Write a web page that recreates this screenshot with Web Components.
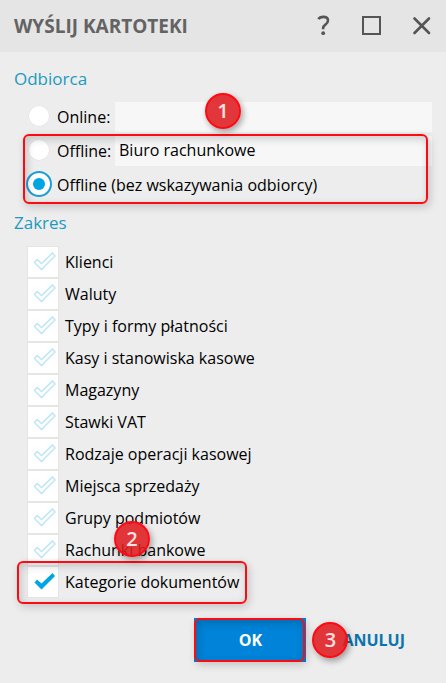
<!DOCTYPE html>
<html lang="pl">
<head>
<meta charset="utf-8">
<meta name="viewport" content="width=device-width, initial-scale=1">
<title>Wyślij kartoteki</title>
<style>
    html, body {
        margin: 0;
        min-height: 100vh;
    }

    body {
        display: flex;
        background: #ededed;
        color: #000;
        font: 16px/24px "Open Sans", "Noto Sans", sans-serif;
        --accent: #00a5e3;
        --mark: #ff0a12;
    }

    dialog-window { flex: 1; }
</style>
</head>
<body>

<dialog-window heading="WYŚLIJ KARTOTEKI">
    <form-section heading="Odbiorca">
        <recipient-picker></recipient-picker>
    </form-section>
    <form-section heading="Zakres">
        <check-option label="Klienci"></check-option>
        <check-option label="Waluty"></check-option>
        <check-option label="Typy i formy płatności"></check-option>
        <check-option label="Kasy i stanowiska kasowe"></check-option>
        <check-option label="Magazyny"></check-option>
        <check-option label="Stawki VAT"></check-option>
        <check-option label="Rodzaje operacji kasowej"></check-option>
        <check-option label="Miejsca sprzedaży"></check-option>
        <check-option label="Grupy podmiotów"></check-option>
        <check-option label="Rachunki bankowe"></check-option>
        <check-option label="Kategorie dokumentów" checked step="2"></check-option>
    </form-section>
    <dialog-actions slot="footer"></dialog-actions>
</dialog-window>

<script>
/* Okno dialogowe: pasek tytułu, treść, stopka */
class DialogWindow extends HTMLElement {
    constructor() {
        super();
        this.attachShadow({ mode: 'open' });
    }

    connectedCallback() {
        this.shadowRoot.innerHTML = `
            <style>
                :host { display: flex; flex-direction: column; }

                header {
                    display: flex;
                    align-items: center;
                    justify-content: space-between;
                    height: 52px;
                    padding: 0 10px 0 14px;
                    background: #e5e5e5;
                }

                h1 {
                    margin: 0;
                    font-size: 19px;
                    line-height: 24px;
                    font-weight: 700;
                    color: #636363;
                }

                nav { display: flex; gap: 21px; }

                button {
                    display: block;
                    width: 28px;
                    height: 28px;
                    padding: 0;
                    border: 0;
                    background: none;
                }

                svg {
                    display: block;
                    fill: none;
                    stroke: #555;
                    stroke-width: 2.6;
                }

                main { padding: 15px 14px 0; }
            </style>
            <header>
                <h1>${this.getAttribute('heading') || ''}</h1>
                <nav>
                    <button type="button" aria-label="Pomoc">
                        <svg width="28" height="28" viewBox="0 0 28 28"><path d="M8.4 7.2C9.4 5.4 11.4 4.9 13.2 4.9C16 4.9 18 6.2 18 8.6C18 10.8 16.8 11.8 15.2 12.9C13.7 13.9 13.1 14.8 13.1 16.4V17.2" stroke-width="2.6"/><circle cx="13.2" cy="21.2" r="1.9" fill="#555" stroke="none"/></svg>
                    </button>
                    <button type="button" aria-label="Maksymalizuj">
                        <svg width="28" height="28" viewBox="0 0 28 28"><rect x="4" y="5" width="17" height="17" stroke-width="2"/></svg>
                    </button>
                    <button type="button" aria-label="Zamknij">
                        <svg width="28" height="28" viewBox="0 0 28 28"><path d="M6.5 6.5L21 21M21 6.5L6.5 21" stroke-linecap="round"/></svg>
                    </button>
                </nav>
            </header>
            <main><slot></slot></main>
            <slot name="footer"></slot>
        `;
    }
}

class FormSection extends HTMLElement {
    constructor() {
        super();
        this.attachShadow({ mode: 'open' });
    }

    connectedCallback() {
        this.shadowRoot.innerHTML = `
            <style>
                :host { display: block; }

                h2 {
                    margin: 0 0 11px;
                    font-size: 17px;
                    line-height: 24px;
                    font-weight: 400;
                    color: #1c9ac0;
                }

                .content { padding: 0 0 0 13px; }
            </style>
            <h2>${this.getAttribute('heading') || ''}</h2>
            <div class="content"><slot></slot></div>
        `;
    }
}

/* Numer kroku w czerwonym kółku */
class StepBadge extends HTMLElement {
    constructor() {
        super();
        this.attachShadow({ mode: 'open' });
        this.shadowRoot.innerHTML = `
            <style>
                :host {
                    display: grid;
                    place-items: center;
                    box-sizing: border-box;
                    width: 36px;
                    height: 36px;
                    border: 2px solid var(--mark);
                    border-radius: 50%;
                    background: rgba(222, 28, 32, .88);
                    box-shadow: 2px 3px 6px rgba(0, 0, 0, .35);
                    color: #ffe1e1;
                    font: 600 20px/24px "Open Sans", sans-serif;
                    pointer-events: none;
                    z-index: 2;
                }
            </style>
            <slot></slot>
        `;
    }
}

/* Czerwona ramka nad wyróżnionym obszarem */
class FocusFrame extends HTMLElement {
    constructor() {
        super();
        this.attachShadow({ mode: 'open' });
        this.shadowRoot.innerHTML = `
            <style>
                :host {
                    display: block;
                    box-sizing: border-box;
                    border: 2px solid var(--mark);
                    border-radius: 6px;
                    box-shadow: 2px 3px 8px rgba(0, 0, 0, .18), inset 2px 3px 8px rgba(0, 0, 0, .18);
                    pointer-events: none;
                    z-index: 1;
                }
            </style>
        `;
    }
}

class RecipientPicker extends HTMLElement {
    constructor() {
        super();
        this.attachShadow({ mode: 'open' });
    }

    connectedCallback() {
        this.shadowRoot.innerHTML = `
            <style>
                :host { display: block; position: relative; padding-bottom: 11px; }

                .row {
                    display: flex;
                    align-items: center;
                    height: 30px;
                }

                .marked {
                    position: relative;
                    display: grid;
                    gap: 4px;
                    margin-top: 4px;
                }

                label { display: flex; align-items: center; gap: 4px; white-space: nowrap; }

                .row.field label { width: 88px; }

                input[type="radio"] {
                    appearance: none;
                    display: grid;
                    place-items: center;
                    box-sizing: border-box;
                    width: 26px;
                    height: 26px;
                    margin: 0 0 2px -1px;
                    border: 2px solid transparent;
                    border-radius: 50%;
                    background: #fff;
                    background-clip: padding-box;
                    box-shadow: inset 0 0 0 1px #e6e6e6;
                }

                label { gap: 5px; }

                input[type="radio"]::before {
                    content: "";
                    width: 12px;
                    height: 12px;
                    border-radius: 50%;
                }

                input[type="radio"]:checked { border-color: #1b9fd8; box-shadow: none; }
                input[type="radio"]:checked::before { background: var(--accent); }

                input[type="text"] {
                    flex: 1;
                    min-width: 0;
                    box-sizing: border-box;
                    height: 30px;
                    padding: 0 4px 2px;
                    border: 0;
                    background: #f7f7f7;
                    color: inherit;
                    font: inherit;
                }

                focus-frame { position: absolute; inset: -2px 4px -4px -4px; }
                step-badge { position: absolute; left: 178px; top: -9px; }
            </style>
            <div class="row field">
                <label><input type="radio" name="recipient">Online:</label>
                <input type="text" aria-label="Odbiorca online">
            </div>
            <div class="marked">
                <div class="row field">
                    <label><input type="radio" name="recipient">Offline:</label>
                    <input type="text" aria-label="Odbiorca offline" value="Biuro rachunkowe">
                </div>
                <div class="row">
                    <label><input type="radio" name="recipient" checked>Offline (bez wskazywania odbiorcy)</label>
                </div>
                <focus-frame></focus-frame>
            </div>
            <step-badge>1</step-badge>
        `;
    }
}

class CheckOption extends HTMLElement {
    constructor() {
        super();
        this.attachShadow({ mode: 'open' });
    }

    connectedCallback() {
        const step = this.getAttribute('step');

        this.shadowRoot.innerHTML = `
            <style>
                :host { display: flex; position: relative; }

                label { display: flex; align-items: center; gap: 6px; }

                .box { display: grid; }
                .box > * { grid-area: 1 / 1; }

                input {
                    appearance: none;
                    box-sizing: border-box;
                    width: 32px;
                    height: 32px;
                    margin: 0;
                    border: 1px solid #e5e5e5;
                    background: #fff;
                }

                svg {
                    fill: none;
                    stroke: #b5e5f7;
                    stroke-width: 1.3;
                    pointer-events: none;
                }

                input:checked + svg { fill: var(--accent); stroke: none; }

                focus-frame { position: absolute; left: -10px; top: -5px; width: 230px; height: 43px; }
                step-badge { position: absolute; left: 87px; top: -45px; }
            </style>
            <label>
                <span class="box">
                    <input type="checkbox" ${this.hasAttribute('checked') ? 'checked' : ''}>
                    <svg width="32" height="32" viewBox="0 0 32 32"><path d="M7.5 16.5L10 13.5L14.5 17.5L25.5 7L28 10L14.5 23.5Z"/></svg>
                </span>
                ${this.getAttribute('label') || ''}
            </label>
            ${step ? `<focus-frame></focus-frame><step-badge>${step}</step-badge>` : ''}
        `;
    }
}

class DialogActions extends HTMLElement {
    constructor() {
        super();
        this.attachShadow({ mode: 'open' });
    }

    connectedCallback() {
        this.shadowRoot.innerHTML = `
            <style>
                :host {
                    display: flex;
                    justify-content: flex-end;
                    gap: 24px;
                    padding: 20px 29px 20px 14px;
                }

                .item { position: relative; display: flex; }

                button {
                    height: 44px;
                    padding: 0 12px;
                    border: 0;
                    background: none;
                    color: #0b74ad;
                    font: 700 16px/24px "Open Sans", sans-serif;
                }

                .primary { width: 112px; background: #0083d8; color: #fff; }

                focus-frame { position: absolute; inset: 0 1px 0 0; }
                step-badge { position: absolute; left: -18px; top: 4px; }
            </style>
            <div class="item">
                <button type="button" class="primary">OK</button>
                <focus-frame></focus-frame>
            </div>
            <div class="item">
                <button type="button">ANULUJ</button>
                <step-badge>3</step-badge>
            </div>
        `;
    }
}

customElements.define('step-badge', StepBadge);
customElements.define('focus-frame', FocusFrame);
customElements.define('recipient-picker', RecipientPicker);
customElements.define('check-option', CheckOption);
customElements.define('form-section', FormSection);
customElements.define('dialog-actions', DialogActions);
customElements.define('dialog-window', DialogWindow);
</script>
</body>
</html>
